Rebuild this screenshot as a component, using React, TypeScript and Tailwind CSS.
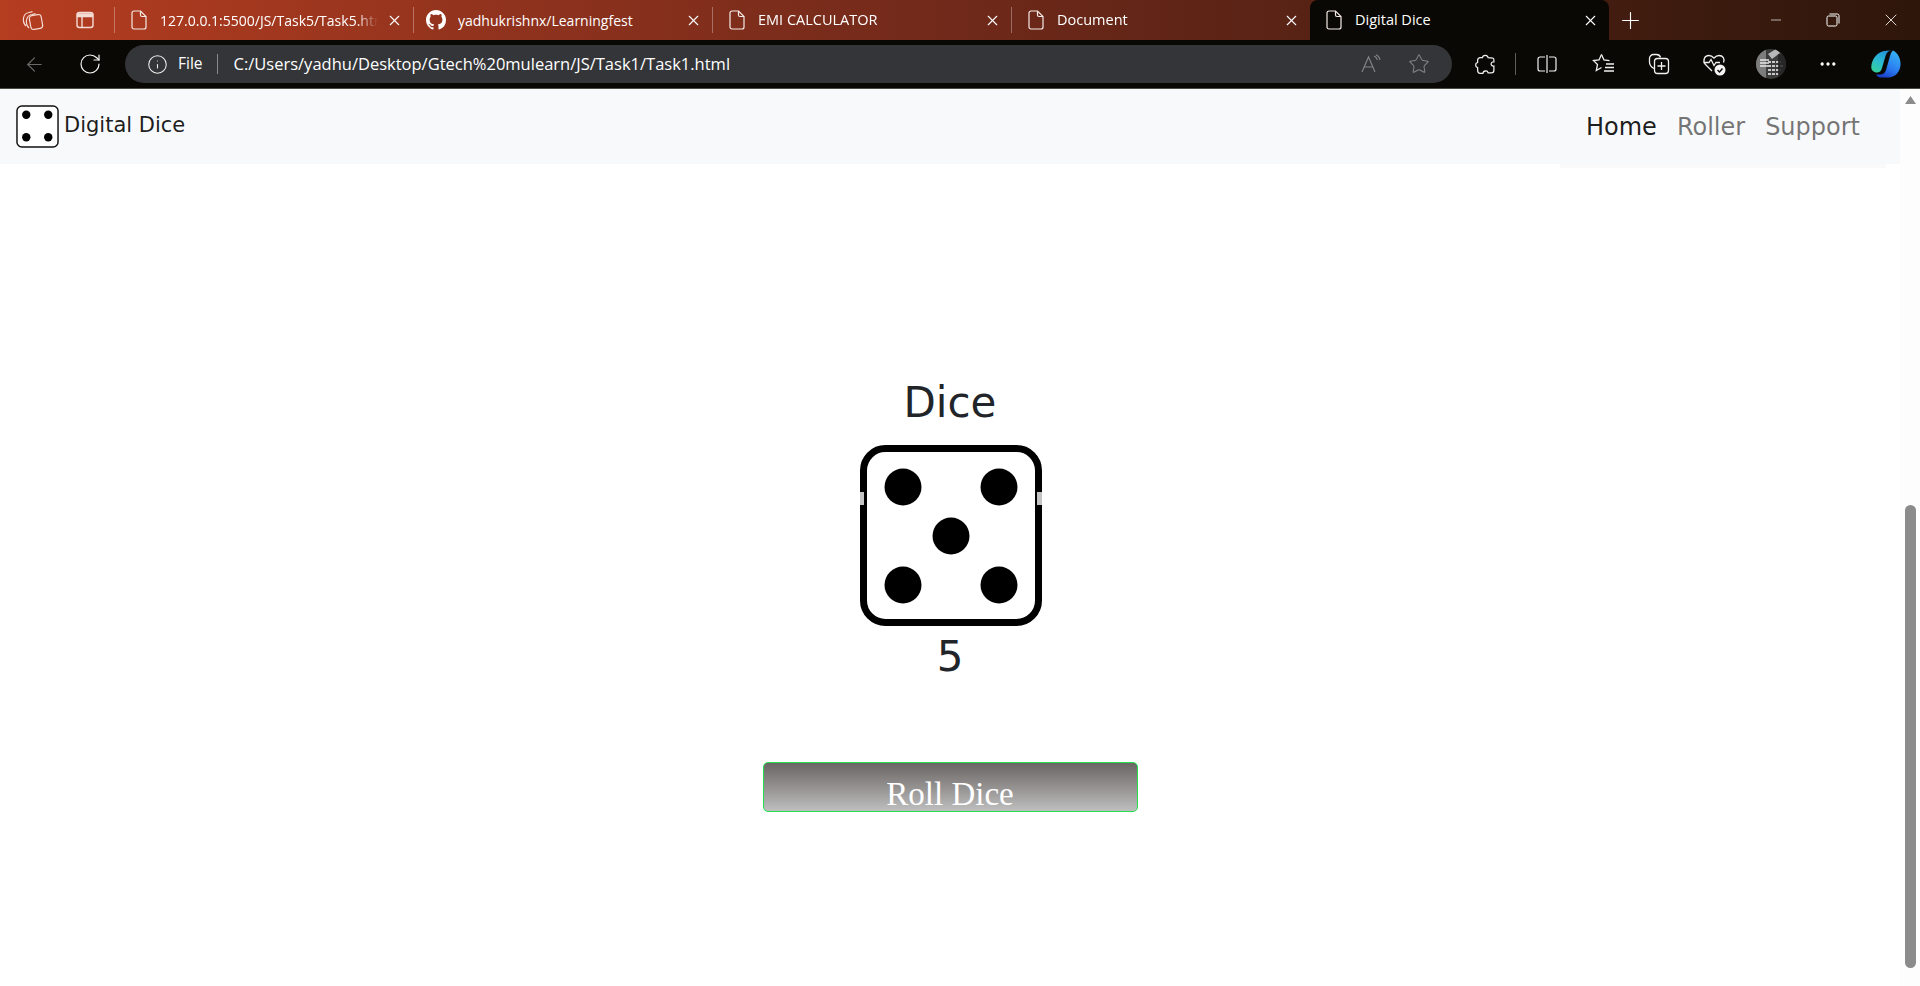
import { MoreHorizontal, Plus, RotateCw, X, ArrowLeft, Info, Star, Minus } from "lucide-react";

const tabs = [
  { title: "127.0.0.1:5500/JS/Task5/Task5.html", github: false, text: "text-[14px]" },
  { title: "yadhukrishnx/Learningfest", github: true, text: "text-[14px]" },
  { title: "EMI CALCULATOR", github: false, text: "text-[14.5px]" },
  { title: "Document", github: false, text: "text-[14.5px]" },
];

function DocIcon() {
  return (
    <svg width="16" height="20" viewBox="0 0 16 20" fill="none" stroke="#f4e9e4" strokeWidth="1.2" className="shrink-0">
      <path d="M3 1h6.500L15 6.500V17a2 2 0 0 1-2 2H3a2 2 0 0 1-2-2V3a2 2 0 0 1 2-2Z" />
      <path d="M9.500 1v4a1.500 1.500 0 0 0 1.500 1.500h4" />
    </svg>
  );
}

function GithubIcon() {
  return (
    <svg width="20" height="20" viewBox="0 0 16 16" fill="#ffffff" className="shrink-0">
      <path d="M8 0C3.58 0 0 3.58 0 8c0 3.54 2.29 6.53 5.47 7.59.4.07.55-.17.55-.38 0-.19-.01-.82-.01-1.49-2.01.37-2.53-.49-2.69-.94-.09-.23-.48-.94-.82-1.13-.28-.15-.68-.52-.01-.53.63-.01 1.08.58 1.23.82.72 1.21 1.87.87 2.33.66.07-.52.28-.87.51-1.07-1.78-.2-3.64-.89-3.64-3.95 0-.87.31-1.59.82-2.15-.08-.2-.36-1.02.08-2.12 0 0 .67-.21 2.2.82.64-.18 1.32-.27 2-.27s1.36.09 2 .27c1.53-1.04 2.2-.82 2.2-.82.44 1.1.16 1.92.08 2.12.51.56.82 1.27.82 2.15 0 3.07-1.87 3.75-3.65 3.95.29.25.54.73.54 1.48 0 1.07-.01 1.93-.01 2.2 0 .21.15.46.55.38A8.01 8.01 0 0 0 16 8c0-4.42-3.58-8-8-8Z" />
    </svg>
  );
}

function Tab({ title, github, text }: { title: string; github: boolean; text: string }) {
  return (
    <div className="flex h-10 w-[299px] items-center">
      <div className="h-[26px] w-[1px] shrink-0 bg-[#ffffff50]" />
      <div className={`flex min-w-0 flex-1 items-center pr-[10px] ${github ? "pl-[12px]" : "pl-[16px]"}`}>
        {github ? <GithubIcon /> : <DocIcon />}
        <span
          className={`min-w-0 flex-1 overflow-hidden whitespace-nowrap text-white ${text} ${
            github ? "ml-[12px]" : "ml-[13px] [mask-image:linear-gradient(to_right,black_90%,transparent_100%)]"
          }`}
        >
          {title}
        </span>
        <X size={17} strokeWidth={1.5} color="#ffffff" className="ml-2 shrink-0" />
      </div>
    </div>
  );
}

function TitleBar() {
  return (
    <div className="flex h-10 items-center bg-gradient-to-r from-[#b53d20] via-[#70291a] to-[#2e160b] font-['Open_Sans',sans-serif]">
      <div className="flex w-[114px] items-center pl-[21px]">
        <svg width="24" height="24" viewBox="0 0 24 24" fill="none" stroke="#f4dcd4" strokeWidth="1.2">
          <path d="M5 18C3 16 2 13 2.500 10 3 7 5 5 8 4.500l3.500-.8" />
          <path d="M8 20c-2-2-3-5-2.500-8C6 9 8 7 11 6.500l3.500-.8" />
          <rect x="9" y="7" width="12" height="14" rx="3" transform="rotate(-10 15 14)" />
        </svg>
        <svg width="20" height="20" viewBox="0 0 20 20" fill="none" stroke="#f4dcd4" strokeWidth="1.4" className="ml-[30px]">
          <rect x="2" y="2.500" width="16" height="15" rx="2.500" />
          <path d="M2.500 4h15v2.500h-15Z" fill="#f4dcd4" />
          <path d="M7 6.500v11" />
        </svg>
      </div>
      {tabs.map((tab) => (
        <Tab key={tab.title} title={tab.title} github={tab.github} text={tab.text} />
      ))}
      <div className="flex h-10 w-[299px] items-center rounded-t-lg bg-[#0a0804] pl-[16px] pr-[10px]">
        <DocIcon />
        <span className="ml-[13px] flex-1 text-[14.5px] text-white">Digital Dice</span>
        <X size={17} strokeWidth={1.5} color="#ffffff" />
      </div>
      <Plus size={27} strokeWidth={1} color="#ffffff" className="ml-[8px]" />
      <div className="ml-auto flex items-center">
        <Minus size={16} strokeWidth={1} color="#ffffff" className="mr-[42px]" />
        <svg width="14" height="14" viewBox="0 0 14 14" fill="none" stroke="#ffffff" className="mr-[41px]">
          <rect x="1" y="3" width="10" height="10" rx="1.500" />
          <path d="M3.500 1H11.500A1.500 1.500 0 0 1 13 2.500V10.500" />
        </svg>
        <X size={20} strokeWidth={1} color="#ffffff" className="mr-[19px]" />
      </div>
    </div>
  );
}

function ToolIcon({ children, className }: { children: React.ReactNode; className: string }) {
  return <div className={`flex shrink-0 items-center justify-center ${className}`}>{children}</div>;
}

function ToolBar() {
  const stroke = "#f0f0f0";
  return (
    <div className="flex h-[49px] items-center border-b border-[#4a4a45] bg-[#0a0804] font-['Open_Sans',sans-serif]">
      <ArrowLeft size={23} strokeWidth={1.2} color="#6a6a68" className="ml-[23px]" />
      <RotateCw size={24} strokeWidth={1.2} color="#f5f5f5" className="ml-[32px]" />
      <div className="ml-[23px] flex h-[38px] w-[1327px] items-center rounded-full bg-[#343538] pl-[22px] pr-[22px]">
        <Info size={21} strokeWidth={1.2} color="#f0f0f0" />
        <span className="ml-[10px] text-[15.5px] text-white">File</span>
        <div className="ml-[14px] h-[20px] w-[1px] bg-[#8a8a8a]" />
        <span className="ml-[16px] whitespace-nowrap text-[16.5px] text-white">C:/Users/yadhu/Desktop/Gtech%20mulearn/JS/Task1/Task1.html</span>
        <div className="ml-auto flex items-center">
          <svg width="22" height="20" viewBox="0 0 22 20" fill="none" stroke="#85858a" strokeWidth="1.1">
            <path d="M2 18 8.500 3 15 18M4.500 13h8" />
            <path d="M14 2c2 .8 3 2.200 3.400 4M16 .8c2.300 1 3.600 2.800 4 5" />
          </svg>
          <Star size={22} strokeWidth={1.1} color="#85858a" className="ml-[26px]" />
        </div>
      </div>
      <ToolIcon className="ml-[23px]">
        <svg width="21" height="21" viewBox="0 0 20 20" fill="none" stroke={stroke} strokeWidth="1.200">
          <path d="M7 3.500C7.500.5 12 .5 12.500 3.500L17 4C18 4 18 5 18 6L18 7.500C14.500 7 14.500 12 18 11.500L18 15.500C18 17 17 18 15.500 18L12.500 18C12 15.500 8 15.500 7.500 18.500L5 18.500C3 18.500 2.500 17 2.500 15.500L2.500 13C0 12.500 0 8.500 2.500 8L2.500 6C2.500 4.500 3.500 3.500 5 3.500Z" />
        </svg>
      </ToolIcon>
      <div className="ml-[19px] h-[22px] w-[1px] bg-[#5c5c5a]" />
      <ToolIcon className="ml-[21px]">
        <svg width="20" height="20" viewBox="0 0 20 20" fill="none" stroke={stroke} strokeWidth="1.2">
          <path d="M8 3H3a2 2 0 0 0-2 2v10a2 2 0 0 0 2 2h5M12 3h5a2 2 0 0 1 2 2v10a2 2 0 0 1-2 2h-5M10 1v18" />
        </svg>
      </ToolIcon>
      <ToolIcon className="ml-[35px]">
        <svg width="24" height="22" viewBox="0 0 24 22" fill="none" stroke={stroke} strokeWidth="1.300">
          <path d="M9.500 1.500 12 7l5.500.6" />
          <path d="M9.500 1.500 7 7l-5.500.6 4 3.900-1.200 6 5.200-3" />
          <path d="M14 11h8M13 14.500h9M12 18h10" />
        </svg>
      </ToolIcon>
      <ToolIcon className="ml-[32px]">
        <svg width="22" height="24" viewBox="0 0 22 24" fill="none" stroke={stroke} strokeWidth="1.3">
          <path d="M6 16.500C3 15 1.500 13 1.500 10V6.500A4 4 0 0 1 5.500 2.500h3c2 0 3.500 1 4 3" />
          <rect x="6.500" y="6.500" width="14" height="15" rx="3" />
          <path d="M13.500 10v8M9.500 14h8" />
        </svg>
      </ToolIcon>
      <ToolIcon className="ml-[32px]">
        <svg width="24" height="24" viewBox="0 0 24 24" fill="none" stroke={stroke} strokeWidth="1.3">
          <path d="M10 19 3.500 12.500C.5 9 2 3.500 7 3.500c2 0 3.500 1 5 2.500 1.500-1.500 3-2.500 5-2.500 4 0 6 3.500 4.500 7" />
          <path d="M1.500 10.500H7l2-3 3 6 2-3h4" />
          <circle cx="18" cy="18" r="5.500" fill="#f4f4f4" stroke="none" />
          <path d="m15.500 18 2 2 3-3.500" stroke="#0a0804" strokeWidth="1.4" />
        </svg>
      </ToolIcon>
      <ToolIcon className="ml-[30px]">
        <svg width="30" height="30" viewBox="0 0 30 30">
          <defs>
            <clipPath id="avatarClip">
              <circle cx="15" cy="15" r="15" />
            </clipPath>
          </defs>
          <g clipPath="url(#avatarClip)">
            <rect width="30" height="30" fill="#3c3c3c" />
            <rect x="0" y="0" width="10" height="30" fill="#7c7c7c" />
            <path d="M4 11h9M4 14h9M4 17h9" stroke="#e6e6e6" strokeWidth="1.5" />
            <path d="M12 5 20 0l4 4-8 6Z" fill="#b8b8b8" />
            <path d="M12 13h13M12 17h15M12 21h13M12 25h11" stroke="#c8c8c8" strokeWidth="2" strokeDasharray="3 1" />
            <rect x="22" y="5" width="8" height="25" fill="#202020" opacity="0.8" />
          </g>
        </svg>
      </ToolIcon>
      <MoreHorizontal size={20} strokeWidth={2} color="#ffffff" className="ml-[32px]" />
      <ToolIcon className="ml-[33px]">
        <svg width="30" height="28" viewBox="0 0 30 28">
          <defs>
            <linearGradient id="copilotA" x1="0.8" y1="0" x2="0.2" y2="1">
              <stop offset="0" stopColor="#1f8ed8" />
              <stop offset="0.5" stopColor="#2bb8d6" />
              <stop offset="1" stopColor="#34d09a" />
            </linearGradient>
            <linearGradient id="copilotB" x1="0.8" y1="0" x2="0.3" y2="1">
              <stop offset="0" stopColor="#38b6f5" />
              <stop offset="0.6" stopColor="#2a7cf0" />
              <stop offset="1" stopColor="#1a3fc8" />
            </linearGradient>
          </defs>
          <path d="M22 .5C27 3 30 9 29.500 15 29 22 24 27.500 17 27.500H10C7.500 27.500 6 26.500 5 24.500H9C12 24.500 14 23 15 20L19 6C19.700 3.500 20.500 1.500 22 .5Z" fill="url(#copilotB)" />
          <path d="M21 .5C17.500.5 15.500 2.500 14.500 6L11 18C10.200 21 8.500 22.500 6 22.500 2.500 22.500 0 20 .3 16.500.8 10 5 3 12 1.200 15 .5 18 .3 21 .5Z" fill="url(#copilotA)" />
        </svg>
      </ToolIcon>
    </div>
  );
}

function DiceFace() {
  const pips = [
    { x: 43, y: 42 },
    { x: 139, y: 42 },
    { x: 91, y: 91 },
    { x: 43, y: 140 },
    { x: 139, y: 140 },
  ];
  return (
    <svg width="182" height="181" viewBox="0 0 182 181" className="block">
      <rect x="3.500" y="3.500" width="175" height="174" rx="22" fill="#ffffff" stroke="#000000" strokeWidth="7" />
      {pips.map((pip) => (
        <circle key={pip.x * 1000 + pip.y} cx={pip.x} cy={pip.y} r="18.500" fill="#000000" />
      ))}
      {/* stock image watermark bleeding over the border */}
      <rect x="0" y="47" width="4" height="13" fill="#c4c4c4" />
      <rect x="177" y="47" width="5" height="13" fill="#c4c4c4" />
    </svg>
  );
}

function Navbar() {
  return (
    <div className="font-['DejaVu_Sans',sans-serif]">
      <div className="flex h-[75px] items-center justify-between bg-[#f8f9fa] pl-4 pr-[40px]">
        <div className="flex items-center">
          <svg width="43" height="43" viewBox="0 0 44 44">
            <rect x="1" y="1" width="42" height="42" rx="5" fill="#ffffff" stroke="#111111" strokeWidth="1.500" />
            <circle cx="10.500" cy="10" r="4.300" fill="#000000" />
            <circle cx="33" cy="10" r="4.300" fill="#000000" />
            <circle cx="10.500" cy="33" r="4.300" fill="#000000" />
            <circle cx="33" cy="33" r="4.300" fill="#000000" />
          </svg>
          <span className="ml-[5px] -translate-y-[1px] text-[21px] text-[#000000e6]">Digital Dice</span>
        </div>
        <div className="flex items-center gap-[20px] text-[24px]">
          <span className="text-[#000000e6]">Home</span>
          <span className="text-[#0000008c]">Roller</span>
          <span className="text-[#0000008c]">Support</span>
        </div>
      </div>
      <div className="ml-auto mr-[14px] h-[4px] w-[326px] bg-[#fafafb]" />
    </div>
  );
}

function Scrollbar() {
  return (
    <div className="flex w-5 shrink-0 flex-col items-center bg-[#fdfdfd]">
      <svg width="11" height="8" viewBox="0 0 11 8" className="mt-[7px]">
        <path d="M5.500 0 11 8H0Z" fill="#8b8b8b" />
      </svg>
      <div className="mt-[401px] h-[463px] w-[11px] rounded-full bg-[#8b8b8b]" />
    </div>
  );
}

export default function App() {
  return (
    <div className="flex h-[986px] flex-col overflow-hidden bg-white">
      <TitleBar />
      <ToolBar />
      <div className="flex min-h-0 flex-1">
        <div className="min-w-0 flex-1">
          <Navbar />
          <div className="flex flex-col items-center pt-[211px] font-['DejaVu_Sans',sans-serif] text-[#212529]">
            <h1 className="text-[42px] leading-[48px]">Dice</h1>
            <div className="ml-[2px] mt-[18px]">
              <DiceFace />
            </div>
            <div className="mt-[7px] text-[42px] leading-[48px]">5</div>
            <button className="mt-[81px] flex h-[50px] w-[375px] items-end justify-center rounded-[5px] border border-[#22e04a] bg-gradient-to-b from-[#6a6664] to-[#bfbfbf] font-['Liberation_Serif',serif] text-[33px] leading-[33px] text-white">
              Roll Dice
            </button>
          </div>
        </div>
        <Scrollbar />
      </div>
    </div>
  );
}
